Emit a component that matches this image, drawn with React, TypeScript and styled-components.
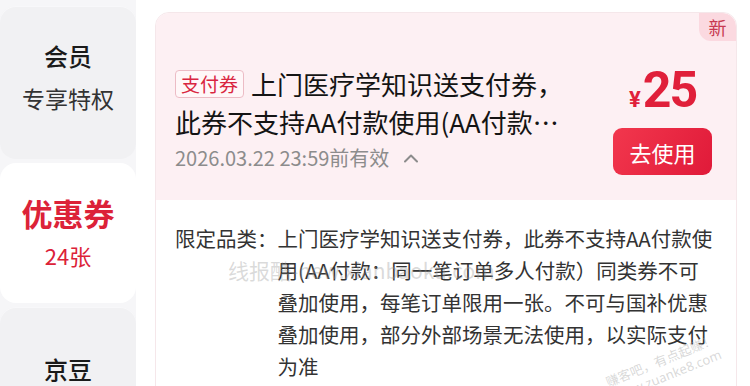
import React from 'react';
import styled, { createGlobalStyle } from 'styled-components';

const GlobalStyle = createGlobalStyle`
  html, body {
    margin: 0;
    padding: 0;
    background: #ffffff;
  }
  body {
    font-family: "Noto Sans CJK SC", "Noto Sans", sans-serif;
    -webkit-font-smoothing: antialiased;
  }
  * {
    box-sizing: border-box;
  }
`;

const Page = styled.div`
  width: 750px;
  height: 386px;
  display: flex;
  overflow: hidden;
  position: relative;
  background: #ffffff;
`;

const Sidebar = styled.nav`
  width: 136px;
  flex-shrink: 0;
  display: flex;
  flex-direction: column;
  gap: 4px;
  padding-top: 6px;
  background: #f6f6f8;
`;

const NavItem = styled.div<{ $active?: boolean; $height: number; $top?: number; $bottom?: number }>`
  height: ${(p) => p.$height}px;
  flex-shrink: 0;
  display: flex;
  flex-direction: column;
  align-items: center;
  justify-content: ${(p) => (p.$top ? 'flex-start' : 'center')};
  padding-top: ${(p) => p.$top || 0}px;
  padding-bottom: ${(p) => p.$bottom || 0}px;
  border-radius: 16px;
  background: ${(p) => (p.$active ? '#ffffff' : '#f1f1f3')};
  box-shadow: ${(p) => (p.$active ? 'none' : 'inset 0 1px 0 #f8f8fa')};
`;

const NavTitle = styled.div<{ $active?: boolean }>`
  font-size: ${(p) => (p.$active ? '31px' : '24px')};
  font-weight: ${(p) => (p.$active ? 700 : 500)};
  line-height: 44px;
  color: ${(p) => (p.$active ? '#dc2238' : '#1a1a1a')};
`;

const NavSub = styled.div<{ $active?: boolean }>`
  font-size: ${(p) => (p.$active ? '22px' : '23px')};
  line-height: 40px;
  color: ${(p) => (p.$active ? '#dc2238' : '#333333')};
`;

const Main = styled.main`
  flex: 1;
  padding: 12px 13px 0 19px;
`;

const Card = styled.section`
  position: relative;
  border: 1px solid #f5e7ea;
  border-radius: 14px;
  overflow: hidden;
  background: #ffffff;
`;

const NewBadge = styled.span`
  position: absolute;
  top: 0;
  right: 0;
  width: 37px;
  height: 28px;
  display: flex;
  align-items: center;
  justify-content: center;
  font-size: 18px;
  color: #c83a52;
  background: #fbd9e0;
  border-radius: 0 14px 0 12px;
`;

const CardTop = styled.div`
  height: 187px;
  display: flex;
  align-items: flex-start;
  justify-content: space-between;
  background: #fdf0f3;
  padding: 52px 24px 0 19px;
`;

const Info = styled.div`
  width: 400px;
`;

const Title = styled.div`
  font-size: 26px;
  line-height: 38px;
  color: #141414;
  display: -webkit-box;
  -webkit-line-clamp: 2;
  -webkit-box-orient: vertical;
  overflow: hidden;
`;

const Tag = styled.span`
  display: inline-block;
  height: 28px;
  line-height: 26px;
  padding: 0 5px;
  margin-right: 7px;
  font-size: 19px;
  color: #d92641;
  background: #fff7f8;
  border: 1px solid #ecbcc5;
  border-radius: 4px;
  vertical-align: 3px;
`;

const Expiry = styled.div`
  display: flex;
  align-items: center;
  gap: 14px;
  margin-top: 1px;
  font-size: 20px;
  line-height: 32px;
  color: #8c8c8c;
`;

const Action = styled.div`
  width: 99px;
  display: flex;
  flex-direction: column;
  align-items: center;
`;

const Price = styled.div`
  height: 50px;
  color: #e0203a;
  font-family: "Roboto", "Noto Sans", sans-serif;
  font-weight: 700;
  font-size: 50px;
  line-height: 50px;
  white-space: nowrap;
`;

const Currency = styled.span`
  font-size: 22px;
  margin-right: 2px;
`;

const Amount = styled.span`
  letter-spacing: -2px;
`;

const UseButton = styled.button`
  width: 99px;
  height: 47px;
  margin-top: 13px;
  border: none;
  border-radius: 9px;
  background: linear-gradient(120deg, #f2374d 0%, #e01a39 100%);
  color: #ffffff;
  font-family: "Noto Sans CJK SC", sans-serif;
  font-size: 22px;
  padding: 0;
`;

const CardBottom = styled.div`
  position: relative;
  display: flex;
  align-items: flex-start;
  padding: 22px 0 20px 19px;
  font-size: 20.5px;
  line-height: 32px;
  color: #333333;
`;

const Label = styled.div`
  flex-shrink: 0;
`;

const Detail = styled.div`
  display: flex;
  flex-direction: column;
`;

const DetailLine = styled.span`
  white-space: nowrap;
`;

const Watermark = styled.span`
  position: absolute;
  left: 72px;
  top: 54px;
  font-size: 21px;
  color: rgba(150, 150, 150, 0.35);
  white-space: nowrap;
  pointer-events: none;
`;

const CornerMark = styled.span`
  position: absolute;
  right: 14px;
  bottom: 18px;
  font-family: "Noto Sans", "Noto Sans CJK SC", sans-serif;
  font-size: 13px;
  line-height: 16px;
  color: rgba(170, 170, 170, 0.45);
  transform: rotate(-22deg);
  text-align: right;
  pointer-events: none;
`;

const ChevronUp = () => (
  <svg width="16" height="10" viewBox="0 0 16 10" fill="none">
    <path d="M2 8.5L8 2.5L14 8.5" stroke="#8c8c8c" strokeWidth="2" strokeLinecap="round" strokeLinejoin="round" />
  </svg>
);

const detailLines = [
  '上门医疗学知识送支付券，此券不支持AA付款使',
  '用(AA付款：同一笔订单多人付款）同类券不可',
  '叠加使用，每笔订单限用一张。不可与国补优惠',
  '叠加使用，部分外部场景无法使用，以实际支付',
  '为准',
];

const App = () => (
  <>
    <GlobalStyle />
    <Page>
      <Sidebar>
        <NavItem $height={153} $bottom={14}>
          <NavTitle>会员</NavTitle>
          <NavSub>专享特权</NavSub>
        </NavItem>
        <NavItem $active $height={140}>
          <NavTitle $active>优惠券</NavTitle>
          <NavSub $active>24张</NavSub>
        </NavItem>
        <NavItem $height={140} $top={40}>
          <NavTitle>京豆</NavTitle>
        </NavItem>
      </Sidebar>
      <Main>
        <Card>
          <NewBadge>新</NewBadge>
          <CardTop>
            <Info>
              <Title>
                <Tag>支付券</Tag>
                上门医疗学知识送支付券，此券不支持AA付款使用(AA付款：同一笔订单多人付款）同类券不可叠加使用
              </Title>
              <Expiry>
                2026.03.22 23:59前有效
                <ChevronUp />
              </Expiry>
            </Info>
            <Action>
              <Price>
                <Currency>¥</Currency>
                <Amount>25</Amount>
              </Price>
              <UseButton>去使用</UseButton>
            </Action>
          </CardTop>
          <CardBottom>
            <Label>限定品类：</Label>
            <Detail>
              {detailLines.map((line) => (
                <DetailLine key={line}>{line}</DetailLine>
              ))}
            </Detail>
            <Watermark>线报酷-new.xianbaoku.com</Watermark>
            <CornerMark>
              赚客吧，有点起赚！
              <br />
              www.zuanke8.com
            </CornerMark>
          </CardBottom>
        </Card>
      </Main>
    </Page>
  </>
);

export default App;
